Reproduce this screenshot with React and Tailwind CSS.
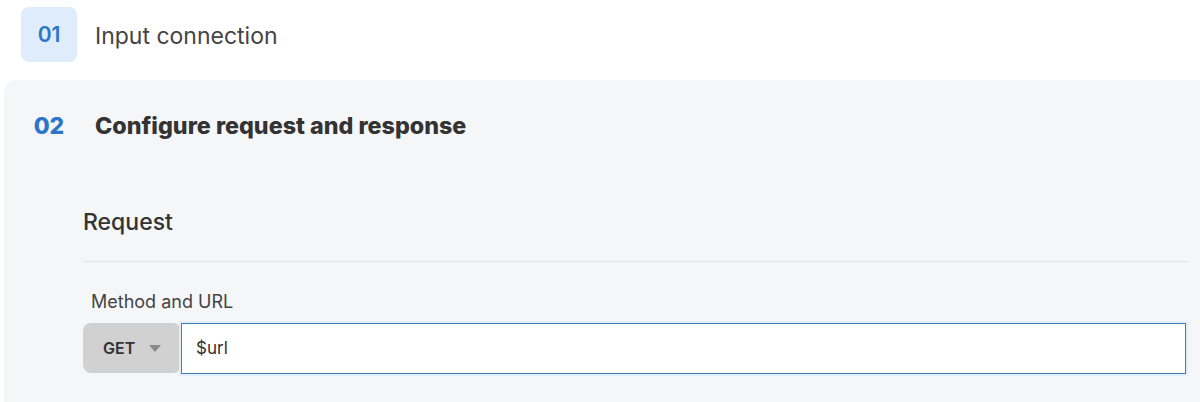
import React from 'react'

const App = () => {
  return (
    <div className="w-[1200px] h-[402px] overflow-hidden bg-white font-['Inter','Noto_Sans',sans-serif] text-[#3a3a3a]">
      {/* Step 1 */}
      <div className="flex items-center gap-[18px] pl-[21px] pt-[7px]">
        <div className="w-14 h-[55px] rounded-lg bg-[#dfecfb] flex items-center justify-center text-[21px] font-semibold text-[#2a77c9]">
          01
        </div>
        <span className="text-[23px] leading-[34px] pt-[2px] text-[#444]">Input connection</span>
      </div>

      {/* Step 2 */}
      <div className="ml-[4px] mt-[18px] h-[400px] rounded-tl-xl bg-[#f5f6f8] pl-[17px] pr-[12px] pt-[18px]">
        <div className="flex items-center gap-[18px] h-14">
          <div className="w-14 flex items-center justify-center text-[23px] font-extrabold text-[#2a77c9]">02</div>
          <span className="text-[23.3px] font-extrabold text-[#333]">Configure request and response</span>
        </div>

        <div className="ml-[62px] mt-[54px]">
          <h3 className="text-[23px] leading-[28px] font-medium text-[#333]">Request</h3>
          <div className="mt-[25px] border-t border-[#e1e3e6]" />
          <label className="block mt-[28px] pl-2 text-[18px] leading-6 text-[#444]">Method and URL</label>
          <div className="mt-[9px] flex h-[51px] mr-[2px]">
            <button
              type="button"
              className="w-[98px] h-[50px] rounded-lg bg-[#d1d1d1] flex items-center pl-5 gap-[14px] text-[16px] font-semibold text-[#333]"
            >
              GET
              <svg width="12" height="7" viewBox="0 0 12 7" className="mt-[1px]">
                <path d="M0 0h12L6 7z" fill="#8a8a8a" />
              </svg>
            </button>
            <div className="flex-1 h-[51px] bg-white border border-[#3d7fb8] shadow-[0_0_0_2px_#e3eefa] flex items-center pl-[14px] text-[17px] text-[#333]">
              $url
            </div>
          </div>
        </div>
      </div>
    </div>
  )
}

export default App
